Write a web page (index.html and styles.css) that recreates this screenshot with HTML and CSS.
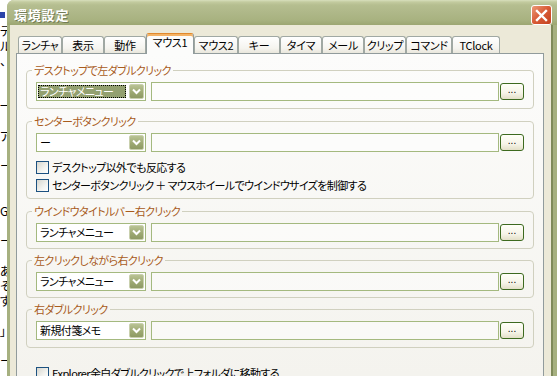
FILE: index.html
```html
<!DOCTYPE html>
<html lang="ja">
<head>
<meta charset="utf-8">
<title>環境設定</title>
<link rel="stylesheet" href="styles.css">
</head>
<body>
<div class="behind">
  <div class="behind-mark"></div>
  <div class="behind-text">テ
ル
、


一

ア

ー


G

ー

あ
そ
す

」

ー</div>
</div>
<div class="window">
  <div class="titlebar">
    <span class="title">環境設定</span>
    <span class="close"><svg width="13" height="13" viewBox="0 0 13 13"><path d="M2 2 L11 11 M11 2 L2 11" stroke="#fff" stroke-width="2.4" stroke-linecap="square"/></svg></span>
  </div>
  <div class="frame">
    <div class="client">
      <div class="tabs">
        <div class="tab w44">ランチャ</div>
        <div class="tab w42">表示</div>
        <div class="tab w42">動作</div>
        <div class="tab sel w48">マウス1</div>
        <div class="tab w44">マウス2</div>
        <div class="tab w42">キー</div>
        <div class="tab w42">タイマ</div>
        <div class="tab w42">メール</div>
        <div class="tab w42">クリップ</div>
        <div class="tab w46">コマンド</div>
        <div class="tab w48">TClock</div>
      </div>
      <div class="panel">
        <fieldset class="grp">
          <legend>デスクトップで左ダブルクリック</legend>
          <div class="row">
            <div class="combo"><span class="combo-text focus">ランチャメニュー</span><span class="combo-btn"><svg width="13" height="13" viewBox="0 0 13 13"><path d="M3 4.5 L6.5 8 L10 4.5" fill="none" stroke="#fff" stroke-width="2"/></svg></span></div>
            <div class="edit"></div>
            <div class="dots">...</div>
          </div>
        </fieldset>

        <fieldset class="grp g2">
          <legend>センターボタンクリック</legend>
          <div class="row">
            <div class="combo"><span class="combo-text">ー</span><span class="combo-btn"><svg width="13" height="13" viewBox="0 0 13 13"><path d="M3 4.5 L6.5 8 L10 4.5" fill="none" stroke="#fff" stroke-width="2"/></svg></span></div>
            <div class="edit"></div>
            <div class="dots">...</div>
          </div>
          <div class="check first"><span class="box"></span><span>デスクトップ以外でも反応する</span></div>
          <div class="check"><span class="box"></span><span>センターボタンクリック ＋ マウスホイールでウインドウサイズを制御する</span></div>
        </fieldset>

        <fieldset class="grp g3">
          <legend>ウインドウタイトルバー右クリック</legend>
          <div class="row">
            <div class="combo"><span class="combo-text">ランチャメニュー</span><span class="combo-btn"><svg width="13" height="13" viewBox="0 0 13 13"><path d="M3 4.5 L6.5 8 L10 4.5" fill="none" stroke="#fff" stroke-width="2"/></svg></span></div>
            <div class="edit"></div>
            <div class="dots">...</div>
          </div>
        </fieldset>

        <fieldset class="grp g4">
          <legend>左クリックしながら右クリック</legend>
          <div class="row">
            <div class="combo"><span class="combo-text">ランチャメニュー</span><span class="combo-btn"><svg width="13" height="13" viewBox="0 0 13 13"><path d="M3 4.5 L6.5 8 L10 4.5" fill="none" stroke="#fff" stroke-width="2"/></svg></span></div>
            <div class="edit"></div>
            <div class="dots">...</div>
          </div>
        </fieldset>

        <fieldset class="grp g5">
          <legend>右ダブルクリック</legend>
          <div class="row">
            <div class="combo"><span class="combo-text">新規付箋メモ</span><span class="combo-btn"><svg width="13" height="13" viewBox="0 0 13 13"><path d="M3 4.5 L6.5 8 L10 4.5" fill="none" stroke="#fff" stroke-width="2"/></svg></span></div>
            <div class="edit"></div>
            <div class="dots">...</div>
          </div>
        </fieldset>

        <div class="check last"><span class="box"></span><span>Explorer余白ダブルクリックで上フォルダに移動する</span></div>
      </div>
    </div>
  </div>
</div>
</body>
</html>
```
FILE: styles.css
```css
* { box-sizing: border-box; }
html, body { margin: 0; padding: 0; }
body {
  width: 557px;
  height: 376px;
  overflow: hidden;
  display: flex;
  align-items: flex-start;
  background: #fff;
  font-family: "Noto Sans CJK JP", "Noto Sans", sans-serif;
  font-size: 11px;
  letter-spacing: -0.6px;
  color: #000;
  font-feature-settings: "palt";
}

.behind { width: 7px; flex: none; height: 376px; overflow: hidden; padding-top: 12px; letter-spacing: 0; }
.behind-mark { width: 5px; height: 6px; background: #2b44a8; margin-bottom: 5px; }
.behind-text { white-space: pre; line-height: 15px; font-size: 12px; width: 7px; overflow: hidden; }

.window {
  flex: none;
  width: 550px;
  height: 420px;
  display: flex;
  flex-direction: column;
  background: #a6b080;
  border-top-left-radius: 7px;
  overflow: hidden;
}
.titlebar {
  height: 25px;
  flex: none;
  display: flex;
  align-items: center;
  padding: 5px 5px 0 7px;
  background: linear-gradient(180deg, #d8dfbd 0px, #c3cb9f 2px, #b5be90 5px, #afb889 12px, #a8b280 20px, #9ca672 25px);
}
.title {
  color: #fff;
  font-weight: bold;
  font-size: 13px;
  letter-spacing: 0.8px;
  line-height: 16px;
  text-shadow: 1px 1px 0 #737c55;
}
.close {
  margin-left: auto;
  width: 21px;
  height: 20px;
  border: 1px solid #fff;
  border-radius: 3px;
  background: linear-gradient(135deg, #ec9a78, #d85a35 50%, #c3421f);
  display: flex;
  align-items: center;
  justify-content: center;
}

.frame { flex: 1; display: flex; padding: 0 4px 0 3px; }
.client {
  flex: 1;
  background: #ece9d8;
  border-right: 2px solid #7f8a5b;
  padding: 8px 7px 0 6px;
  display: flex;
  flex-direction: column;
}

.tabs {
  display: flex;
  align-items: flex-end;
  height: 21px;
  flex: none;
  margin-bottom: -1px;
  padding-left: 2px;
  position: relative;
  z-index: 1;
}
.tab {
  height: 17px;
  margin-bottom: 1px;
  border: 1px solid #a0a8a3;
  border-bottom: none;
  border-radius: 3px 3px 0 0;
  background: linear-gradient(#ffffff, #f5f4ef 70%, #e9e7dc);
  text-align: center;
  font-size: 11px;
  letter-spacing: -0.3px;
  line-height: 14px;
  padding-top: 1px;
  white-space: nowrap;
}
.tab.sel {
  height: 21px;
  margin-bottom: 0;
  border-color: #919b9c;
  border-top: 1px solid #e0892c;
  box-shadow: inset 0 2px 0 #f4b264;
  background: #fcfcfb;
  padding-top: 1px;
}
.w42 { width: 42px; }
.w44 { width: 44px; }
.w46 { width: 46px; }
.w48 { width: 48px; }

.panel {
  height: 345px;
  flex: none;
  border: 1px solid #919b9c;
  background: linear-gradient(#fcfcfb, #f4f3ee 320px);
  padding: 9px 9px 0;
  display: flex;
  flex-direction: column;
}

.grp {
  margin: 0;
  padding: 5px 9px 7px;
  border: 1px solid #d0d0bf;
  border-radius: 4px;
  min-width: 0;
}
.grp legend {
  padding: 0 2px;
  margin-left: -4px;
  color: #a85b1c;
  line-height: 14px;
  font-size: 11px;
}
.g2 { margin-top: 5px; padding-bottom: 6px; }
.g3 { margin-top: 5px; padding-bottom: 6px; }
.g4 { margin-top: 4px; padding-bottom: 6px; }
.g5 { margin-top: 4px; }

.row { display: flex; align-items: flex-start; }
.combo {
  width: 110px;
  height: 19px;
  flex: none;
  border: 1px solid #a4b97f;
  background: #fff;
  padding: 1px;
  display: flex;
  margin-right: 5px;
}
.combo-text {
  flex: 1;
  min-width: 0;
  height: 13px;
  margin: 1px 3px 0 0;
  padding-left: 2px;
  line-height: 13px;
  font-size: 11px;
  white-space: nowrap;
}
.combo-text.focus {
  background: #93a070;
  color: #fff;
  outline: 1px dotted #000;
  outline-offset: -1px;
}
.combo-btn {
  width: 15px;
  height: 15px;
  flex: none;
  border: 1px solid #c9d0ae;
  border-radius: 2px;
  background: linear-gradient(#b9c394, #9ba770 60%, #8e9a64);
  display: flex;
  align-items: center;
  justify-content: center;
}
.edit {
  flex: 1;
  height: 19px;
  border: 1px solid #a4b97f;
  background: rgba(255, 255, 255, 0.45);
}
.dots {
  width: 24px;
  height: 17px;
  flex: none;
  margin: 1px 0 0 1px;
  border: 1px solid #3d6a1f;
  border-radius: 3px;
  background: linear-gradient(#fffff8, #f6f4e8 60%, #e3dfc8);
  font-family: "Liberation Sans", sans-serif;
  font-size: 10px;
  letter-spacing: 0;
  line-height: 12px;
  text-align: center;
}

.check {
  display: flex;
  align-items: center;
  height: 13px;
  line-height: 13px;
  margin-top: 5px;
  white-space: nowrap;
}
.check.first { margin-top: 9px; }
.check.last { margin: 19px 0 0 10px; }
.box {
  width: 13px;
  height: 13px;
  flex: none;
  border: 1px solid #1c5180;
  background: linear-gradient(135deg, #d6d6cf, #f3f3ef 60%, #fff);
  margin-right: 3px;
}
```
